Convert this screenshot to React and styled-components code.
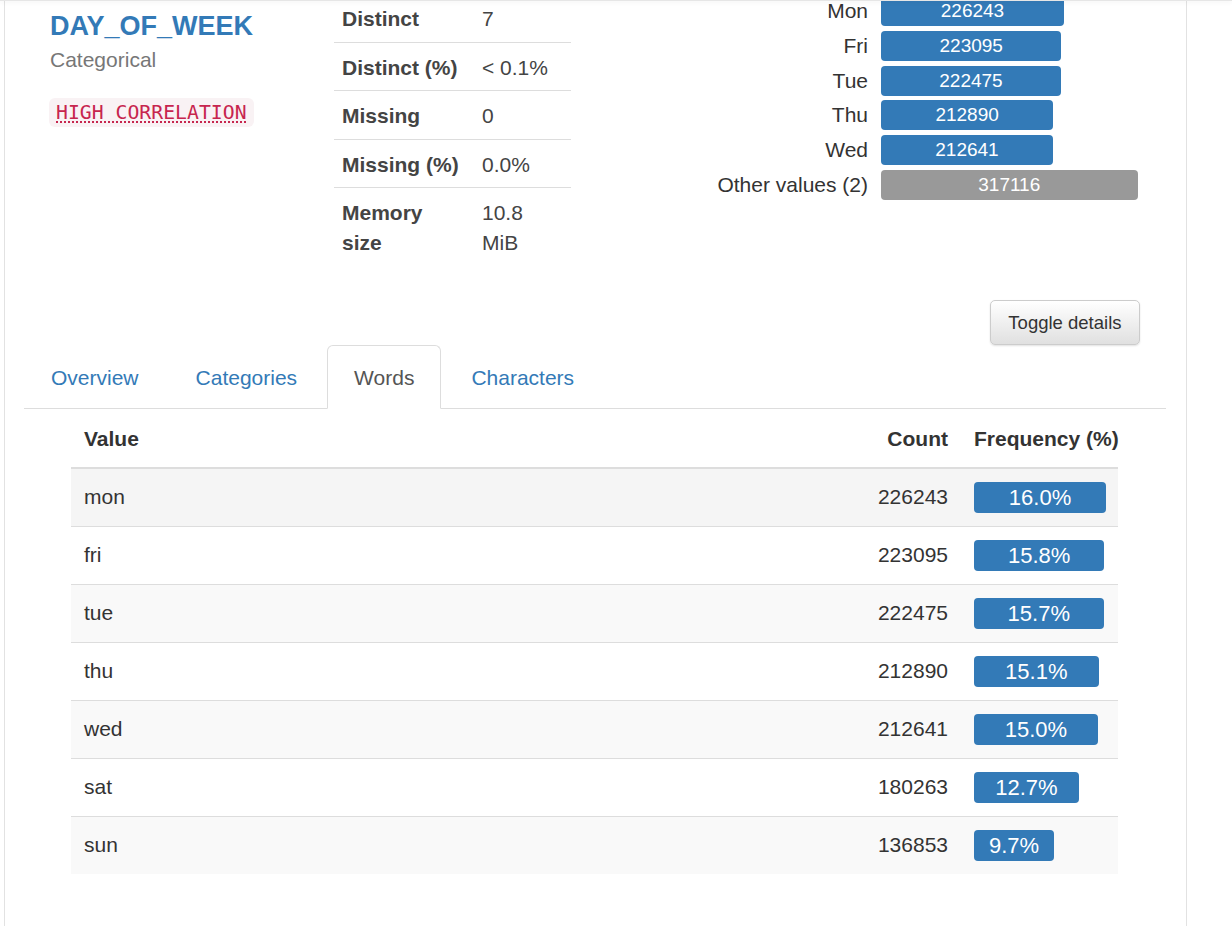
import styled, { createGlobalStyle } from "styled-components";

const GlobalStyle = createGlobalStyle`
	html, body {
		margin: 0;
		padding: 0;
		background: #fff;
	}
	body {
		font-family: "Liberation Sans", Arial, sans-serif;
		font-size: 21px;
		line-height: 30px;
		color: #333;
	}
	* {
		box-sizing: border-box;
	}
`;

const TopShadow = styled.div`
	position: fixed;
	top: 0;
	left: 0;
	right: 0;
	height: 1px;
	background: #e6e6e6;
	box-shadow: 0 1px 4px rgba(0, 0, 0, 0.12);
	z-index: 10;
`;

const Page = styled.div`
	padding-left: 4px;
	min-height: 100vh;
	display: flex;
`;

const Panel = styled.div`
	width: 1183px;
	min-height: 100vh;
	border-left: 1px solid #e2e2e2;
	border-right: 1px solid #e2e2e2;
	padding: 0 20px 0 19px;
`;

const VariableRow = styled.div`
	display: grid;
	grid-template-columns: 284px 237px 1fr;
	padding-left: 26px;
	margin-top: -6px;
`;

const Info = styled.div`
	display: flex;
	flex-direction: column;
	align-items: flex-start;
`;

const VarName = styled.div`
	margin-top: 17px;
	font-size: 27px;
	line-height: 30px;
	font-weight: 700;
	color: #337ab7;
`;

const VarType = styled.div`
	margin-top: 4px;
	color: #777;
`;

const Alert = styled.code`
	margin-top: 23px;
	margin-left: -1px;
	display: inline-block;
	padding: 3px 7px;
	line-height: 23px;
	font-family: "DejaVu Sans Mono", "Liberation Mono", monospace;
	font-size: 19.8px;
	color: #c7254e;
	background: #f9f2f4;
	border-radius: 6px;
	text-decoration: underline dotted #c7254e;
	text-underline-offset: 3px;
`;

const StatsTable = styled.table`
	width: 237px;
	table-layout: fixed;
	border-collapse: collapse;
	align-self: start;
`;

const StatRow = styled.tr`
	&:not(:last-child) {
		border-bottom: 1px solid #ddd;
	}
`;

const StatLabel = styled.th`
	width: 140px;
	text-align: left;
	font-weight: 700;
	color: #444;
	padding: 10px 8px 7.5px;
	vertical-align: top;
`;

const StatValue = styled.td`
	padding: 10px 12px 7.5px 8px;
	color: #444;
	vertical-align: top;
`;

const Chart = styled.div`
	display: grid;
	grid-template-columns: 297px 1fr;
	column-gap: 13px;
	row-gap: 4.8px;
	padding-top: 2px;
	align-content: start;
`;

const ChartLabel = styled.div`
	text-align: right;
	line-height: 30px;
	color: #333;
`;

const ChartBar = styled.div`
	height: 30px;
	line-height: 30px;
	border-radius: 4px;
	background: ${(p) => (p.$other ? "#999" : "#337ab7")};
	color: #fff;
	font-size: 19px;
	text-align: center;
`;

const ButtonRow = styled.div`
	display: flex;
	justify-content: flex-end;
	padding-right: 26px;
	margin-top: 34px;
`;

const ToggleButton = styled.button`
	font-family: inherit;
	font-size: 18.5px;
	line-height: 27px;
	padding: 8px 17.5px;
	color: #333;
	border: 1px solid #ccc;
	border-radius: 5px;
	background: linear-gradient(to bottom, #fff 0%, #e0e0e0 100%);
	box-shadow: 0 1px 2px rgba(0, 0, 0, 0.12);
	cursor: pointer;
`;

const Tabs = styled.ul`
	display: flex;
	list-style: none;
	margin: 0;
	padding: 0;
	border-bottom: 1px solid #ddd;
`;

const Tab = styled.li`
	margin: 0 3px -1px 0;
	padding: 17px 26px 15px;
	line-height: 30px;
	border: 1px solid ${(p) => (p.$active ? "#ddd" : "transparent")};
	border-bottom-color: ${(p) => (p.$active ? "#fff" : "transparent")};
	border-radius: 6px 6px 0 0;
	background: ${(p) => (p.$active ? "#fff" : "transparent")};
	color: ${(p) => (p.$active ? "#555" : "#337ab7")};
	cursor: pointer;
`;

const TabPane = styled.div`
	padding: 0 48px 0 47px;
`;

const FreqTable = styled.table`
	width: 100%;
	table-layout: fixed;
	border-collapse: collapse;
`;

const HeadCell = styled.th`
	padding: 15px 13px 13px;
	line-height: 30px;
	font-weight: 700;
	white-space: nowrap;
	border-bottom: 2px solid #ddd;
	text-align: ${(p) => (p.$right ? "right" : "left")};
	width: ${(p) => p.$width || "auto"};
`;

const FreqRow = styled.tr`
	background: ${(p) => (p.$hover ? "#f5f5f5" : p.$odd ? "#f9f9f9" : "#fff")};
	& + & {
		border-top: 1px solid #ddd;
	}
`;

const Cell = styled.td`
	padding: 13px;
	line-height: 30px;
	vertical-align: middle;
	text-align: ${(p) => (p.$right ? "right" : "left")};
`;

const FreqBar = styled.div`
	height: 31px;
	line-height: 31px;
	border-radius: 4px;
	background: #337ab7;
	color: #fff;
	text-align: center;
	font-size: 22px;
`;

const stats = [
	["Distinct", "7"],
	["Distinct (%)", "< 0.1%"],
	["Missing", "0"],
	["Missing (%)", "0.0%"],
	["Memory size", "10.8 MiB"],
];

const common = [
	{ label: "Mon", count: 226243 },
	{ label: "Fri", count: 223095 },
	{ label: "Tue", count: 222475 },
	{ label: "Thu", count: 212890 },
	{ label: "Wed", count: 212641 },
	{ label: "Other values (2)", count: 317116, other: true },
];

const words = [
	{ value: "mon", count: 226243, pct: 16.0 },
	{ value: "fri", count: 223095, pct: 15.8 },
	{ value: "tue", count: 222475, pct: 15.7 },
	{ value: "thu", count: 212890, pct: 15.1 },
	{ value: "wed", count: 212641, pct: 15.0 },
	{ value: "sat", count: 180263, pct: 12.7 },
	{ value: "sun", count: 136853, pct: 9.7 },
];

const tabs = ["Overview", "Categories", "Words", "Characters"];

const maxCount = 317116;

const App = () => {
	return (
		<>
			<GlobalStyle />
			<TopShadow />
			<Page>
				<Panel>
					<VariableRow>
						<Info>
							<VarName>DAY_OF_WEEK</VarName>
							<VarType>Categorical</VarType>
							<Alert>HIGH CORRELATION</Alert>
						</Info>

						<StatsTable>
							<tbody>
								{stats.map(([label, value]) => (
									<StatRow key={label}>
										<StatLabel>{label}</StatLabel>
										<StatValue>{value}</StatValue>
									</StatRow>
								))}
							</tbody>
						</StatsTable>

						<Chart>
							{common.flatMap((item) => [
								<ChartLabel key={item.label + "-l"}>{item.label}</ChartLabel>,
								<div key={item.label + "-b"}>
									<ChartBar $other={item.other} style={{ width: `${(item.count / maxCount) * 256.5}px` }}>
										{item.count}
									</ChartBar>
								</div>,
							])}
						</Chart>
					</VariableRow>

					<ButtonRow>
						<ToggleButton>Toggle details</ToggleButton>
					</ButtonRow>

					<Tabs>
						{tabs.map((t) => (
							<Tab key={t} $active={t === "Words"}>
								{t}
							</Tab>
						))}
					</Tabs>

					<TabPane>
						<FreqTable>
							<thead>
								<tr>
									<HeadCell>Value</HeadCell>
									<HeadCell $right $width="120px">
										Count
									</HeadCell>
									<HeadCell $width="157px">Frequency (%)</HeadCell>
								</tr>
							</thead>
							<tbody>
								{words.map((w, i) => (
									<FreqRow key={w.value} $odd={i % 2 === 0} $hover={i === 0}>
										<Cell>{w.value}</Cell>
										<Cell $right>{w.count}</Cell>
										<Cell>
											<FreqBar style={{ width: `${w.pct * 8.25}px` }}>{w.pct.toFixed(1)}%</FreqBar>
										</Cell>
									</FreqRow>
								))}
							</tbody>
						</FreqTable>
					</TabPane>
				</Panel>
			</Page>
		</>
	);
};

export default App;
